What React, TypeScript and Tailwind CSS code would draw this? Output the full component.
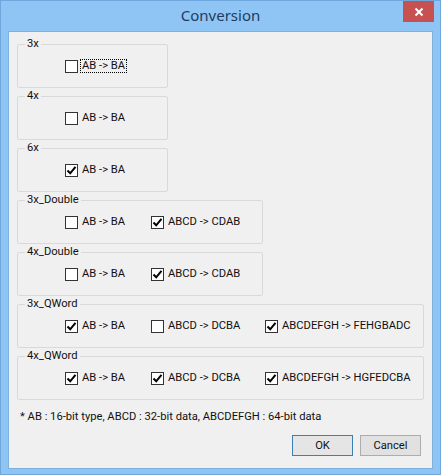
import React from 'react'

type Opt = { label: string; checked: boolean; focused?: boolean }
type Group = { title: string; width: string; options: Opt[] }

const groups: Group[] = [
  { title: '3x', width: 'w-[151px]', options: [{ label: 'AB -> BA', checked: false, focused: true }] },
  { title: '4x', width: 'w-[151px]', options: [{ label: 'AB -> BA', checked: false }] },
  { title: '6x', width: 'w-[151px]', options: [{ label: 'AB -> BA', checked: true }] },
  {
    title: '3x_Double',
    width: 'w-[246px]',
    options: [
      { label: 'AB -> BA', checked: false },
      { label: 'ABCD -> CDAB', checked: true },
    ],
  },
  {
    title: '4x_Double',
    width: 'w-[246px]',
    options: [
      { label: 'AB -> BA', checked: false },
      { label: 'ABCD -> CDAB', checked: true },
    ],
  },
  {
    title: '3x_QWord',
    width: 'w-[407px]',
    options: [
      { label: 'AB -> BA', checked: true },
      { label: 'ABCD -> DCBA', checked: false },
      { label: 'ABCDEFGH -> FEHGBADC', checked: true },
    ],
  },
  {
    title: '4x_QWord',
    width: 'w-[407px]',
    options: [
      { label: 'AB -> BA', checked: true },
      { label: 'ABCD -> DCBA', checked: true },
      { label: 'ABCDEFGH -> HGFEDCBA', checked: true },
    ],
  },
]

const colWidths = ['w-[86px]', 'w-[114px]', 'w-auto']

const CheckBox: React.FC<Opt & { col: number; last: boolean }> = ({ label, checked, focused, col, last }) => (
  <label className={`flex shrink-0 items-center ${last ? 'w-auto' : colWidths[col]}`}>
    <span className="flex h-[13px] w-[13px] shrink-0 items-center justify-center border border-[#333333] bg-white">
      {checked && (
        <svg width="11" height="11" viewBox="0 0 11 11">
          <path d="M1.5 5.5 L4.2 8.3 L9.5 1.8" fill="none" stroke="#000" strokeWidth="2" />
        </svg>
      )}
    </span>
    <span
      className={`ml-[2px] whitespace-nowrap px-[1px] leading-[12px] ${
        focused ? 'border border-dotted border-black' : 'border border-transparent'
      }`}
    >
      {label}
    </span>
  </label>
)

export default function App() {
  return (
    <div
      className="flex h-[475px] w-[441px] flex-col border border-[#6fa6dc] bg-[#8fc5f5] text-[11.2px] text-[#111111]"
      style={{ fontFamily: 'Roboto, "Liberation Sans", Arial, sans-serif' }}
    >
      <div className="relative flex h-[30px] shrink-0 items-center justify-center">
        <span
          className="-mt-[1px] text-[15px] text-[#1f3c5e]"
          style={{ fontFamily: '"Noto Sans", "Open Sans", sans-serif' }}
        >
          Conversion
        </span>
        <div className="absolute right-[6px] top-0 flex h-[21px] w-[31px] items-center justify-center bg-[#c75050]">
          <svg width="10" height="10" viewBox="0 0 10 10">
            <path d="M1.5 1.5 L8.5 8.5 M8.5 1.5 L1.5 8.5" stroke="#fff" strokeWidth="2" />
          </svg>
        </div>
      </div>

      <div className="mx-[7px] mb-[5px] flex flex-1 flex-col border border-[#7fb0de] bg-[#f0f0f0] pl-[8px] pt-[5px]">
        <div className="flex flex-col gap-[1px]">
          {groups.map((g) => (
            <fieldset
              key={g.title}
              className={`h-[51px] min-w-0 ${g.width} rounded-[2px] border border-[#d9d9d9] pl-[47px]`}
            >
              <legend className="-ml-[40px] px-[2px] leading-[14px]">{g.title}</legend>
              <div className="mt-[8px] flex items-center">
                {g.options.map((o, i) => (
                  <CheckBox key={o.label} {...o} col={i} last={i === g.options.length - 1} />
                ))}
              </div>
            </fieldset>
          ))}
        </div>

        <p className="ml-[3px] mt-[10px] leading-[14px]">
          * AB : 16-bit type, ABCD : 32-bit data, ABCDEFGH : 64-bit data
        </p>

        <div className="mr-[11px] mt-[11px] flex justify-end gap-[7px]">
          <button className="h-[21px] w-[61px] border border-[#3c7fb1] bg-[#e5e5e5] leading-none">
            OK
          </button>
          <button className="h-[21px] w-[61px] border border-[#adadad] bg-[#e1e1e1] leading-none">
            Cancel
          </button>
        </div>
      </div>
    </div>
  )
}
